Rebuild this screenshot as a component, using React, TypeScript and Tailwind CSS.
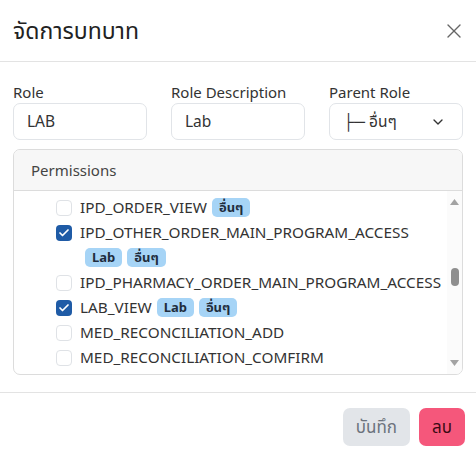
import React from "react";
import { ChevronDown, X, Check } from "lucide-react";

type Perm = { name: string; checked?: boolean; tags?: string[]; wrap?: boolean };

const perms: Perm[] = [
	{ name: "IPD_ORDER_VIEW", tags: ["อื่นๆ"] },
	{ name: "IPD_OTHER_ORDER_MAIN_PROGRAM_ACCESS", checked: true, tags: ["Lab", "อื่นๆ"], wrap: true },
	{ name: "IPD_PHARMACY_ORDER_MAIN_PROGRAM_ACCESS" },
	{ name: "LAB_VIEW", checked: true, tags: ["Lab", "อื่นๆ"] },
	{ name: "MED_RECONCILIATION_ADD" },
	{ name: "MED_RECONCILIATION_COMFIRM" },
];

const font = { fontFamily: '"Noto Sans", "Noto Sans Thai", sans-serif' };

const Badge = ({ text }: { text: string }) => (
	<span className="ml-[5px] inline-flex h-[19px] items-center rounded-[5px] bg-[#a6d4f6] px-[7px] text-[13px] font-bold leading-none text-[#1f2d3d]">
		{text}
	</span>
);

const Row = ({ p }: { p: Perm }) => (
	<div className="flex items-start pl-[42px]">
		<div className="flex h-[25px] items-center">
			{p.checked ? (
				<span className="flex h-4 w-4 items-center justify-center rounded-[4px] bg-[#1f5ba6]">
					<Check className="h-3 w-3 text-white" strokeWidth={3.5} />
				</span>
			) : (
				<span className="h-4 w-4 rounded-[4px] border border-[#dfe2e6] bg-white" />
			)}
		</div>
		<div className="ml-[8px] flex flex-wrap items-center">
			<span className="h-[25px] text-[15.3px] leading-[25px] text-[#333]">{p.name}</span>
			{p.wrap ? (
				<div className="flex h-[25px] w-full items-center">
					{p.tags?.map((t) => <Badge key={t} text={t} />)}
				</div>
			) : (
				p.tags?.map((t) => <Badge key={t} text={t} />)
			)}
		</div>
	</div>
);

// drawn scrollbar, as in the screenshot
const Scrollbar = () => (
	<div className="flex w-[15px] flex-col items-center bg-[#fbfbfb] py-[8px]">
		<svg width="9" height="6" viewBox="0 0 9 6">
			<path d="M4.5 0 L9 6 L0 6 Z" fill="#a3a3a3" />
		</svg>
		<div className="flex flex-1 flex-col items-center pt-[63px]">
			<div className="h-[18px] w-[8px] rounded-full bg-[#8f8f8f]" />
		</div>
		<svg width="9" height="6" viewBox="0 0 9 6">
			<path d="M0 0 L9 0 L4.5 6 Z" fill="#a3a3a3" />
		</svg>
	</div>
);

export default function App() {
	return (
		<div className="h-[458px] w-[476px] bg-white" style={font}>
			{/* header */}
			<div className="flex h-[62px] items-center justify-between border-b border-[#e3e3e3] pl-[13px] pr-[10px]">
				<h1 className="text-[23px] font-normal text-[#222]">จัดการบทบาท</h1>
				<X className="h-[24px] w-[24px] text-[#666]" strokeWidth={1.4} />
			</div>

			{/* body */}
			<div className="px-[13px] pt-[20px] pb-[17px]">
				<div className="grid grid-cols-3 gap-x-6">
					{[
						["Role", "LAB"],
						["Role Description", "Lab"],
					].map(([label, val]) => (
						<div key={label}>
							<div className="h-[21px] text-[15px] leading-[20px] text-[#333]">{label}</div>
							<div className="flex h-[37px] items-center rounded-[7px] border border-[#e1e4e8] px-[13px] text-[15.5px] text-[#333]">
								{val}
							</div>
						</div>
					))}
					<div>
						<div className="h-[21px] text-[15px] leading-[20px] text-[#333]">Parent Role</div>
						<div className="flex h-[37px] items-center justify-between rounded-[7px] border border-[#e1e4e8] pl-[13px] pr-[16px] text-[15.5px] text-[#333]">
							<span>├─ อื่นๆ</span>
							<ChevronDown className="h-4 w-4 text-[#333]" strokeWidth={2} />
						</div>
					</div>
				</div>

				<div className="mt-[9px] overflow-hidden rounded-[7px] border border-[#dcdcdc]">
					<div className="flex h-[41px] items-center border-b border-[#dcdcdc] bg-[#f7f7f7] px-[17px] text-[15px] text-[#444]">
						Permissions
					</div>
					<div className="flex h-[183px]">
						<div className="flex-1 overflow-hidden pt-[4px]">
							{perms.map((p) => (
								<Row key={p.name} p={p} />
							))}
						</div>
						<Scrollbar />
					</div>
				</div>
			</div>

			{/* footer */}
			<div className="flex items-center justify-end gap-[9px] border-t border-[#e3e3e3] px-[11px] pt-[15px]">
				<button className="h-[38px] rounded-[7px] bg-[#e2e5e9] px-[13px] text-[17px] text-[#6c737d]">
					บันทึก
				</button>
				<button className="h-[38px] rounded-[7px] bg-[#f5577b] px-[13px] text-[17px] text-[#3a0a14]">
					ลบ
				</button>
			</div>
		</div>
	);
}
